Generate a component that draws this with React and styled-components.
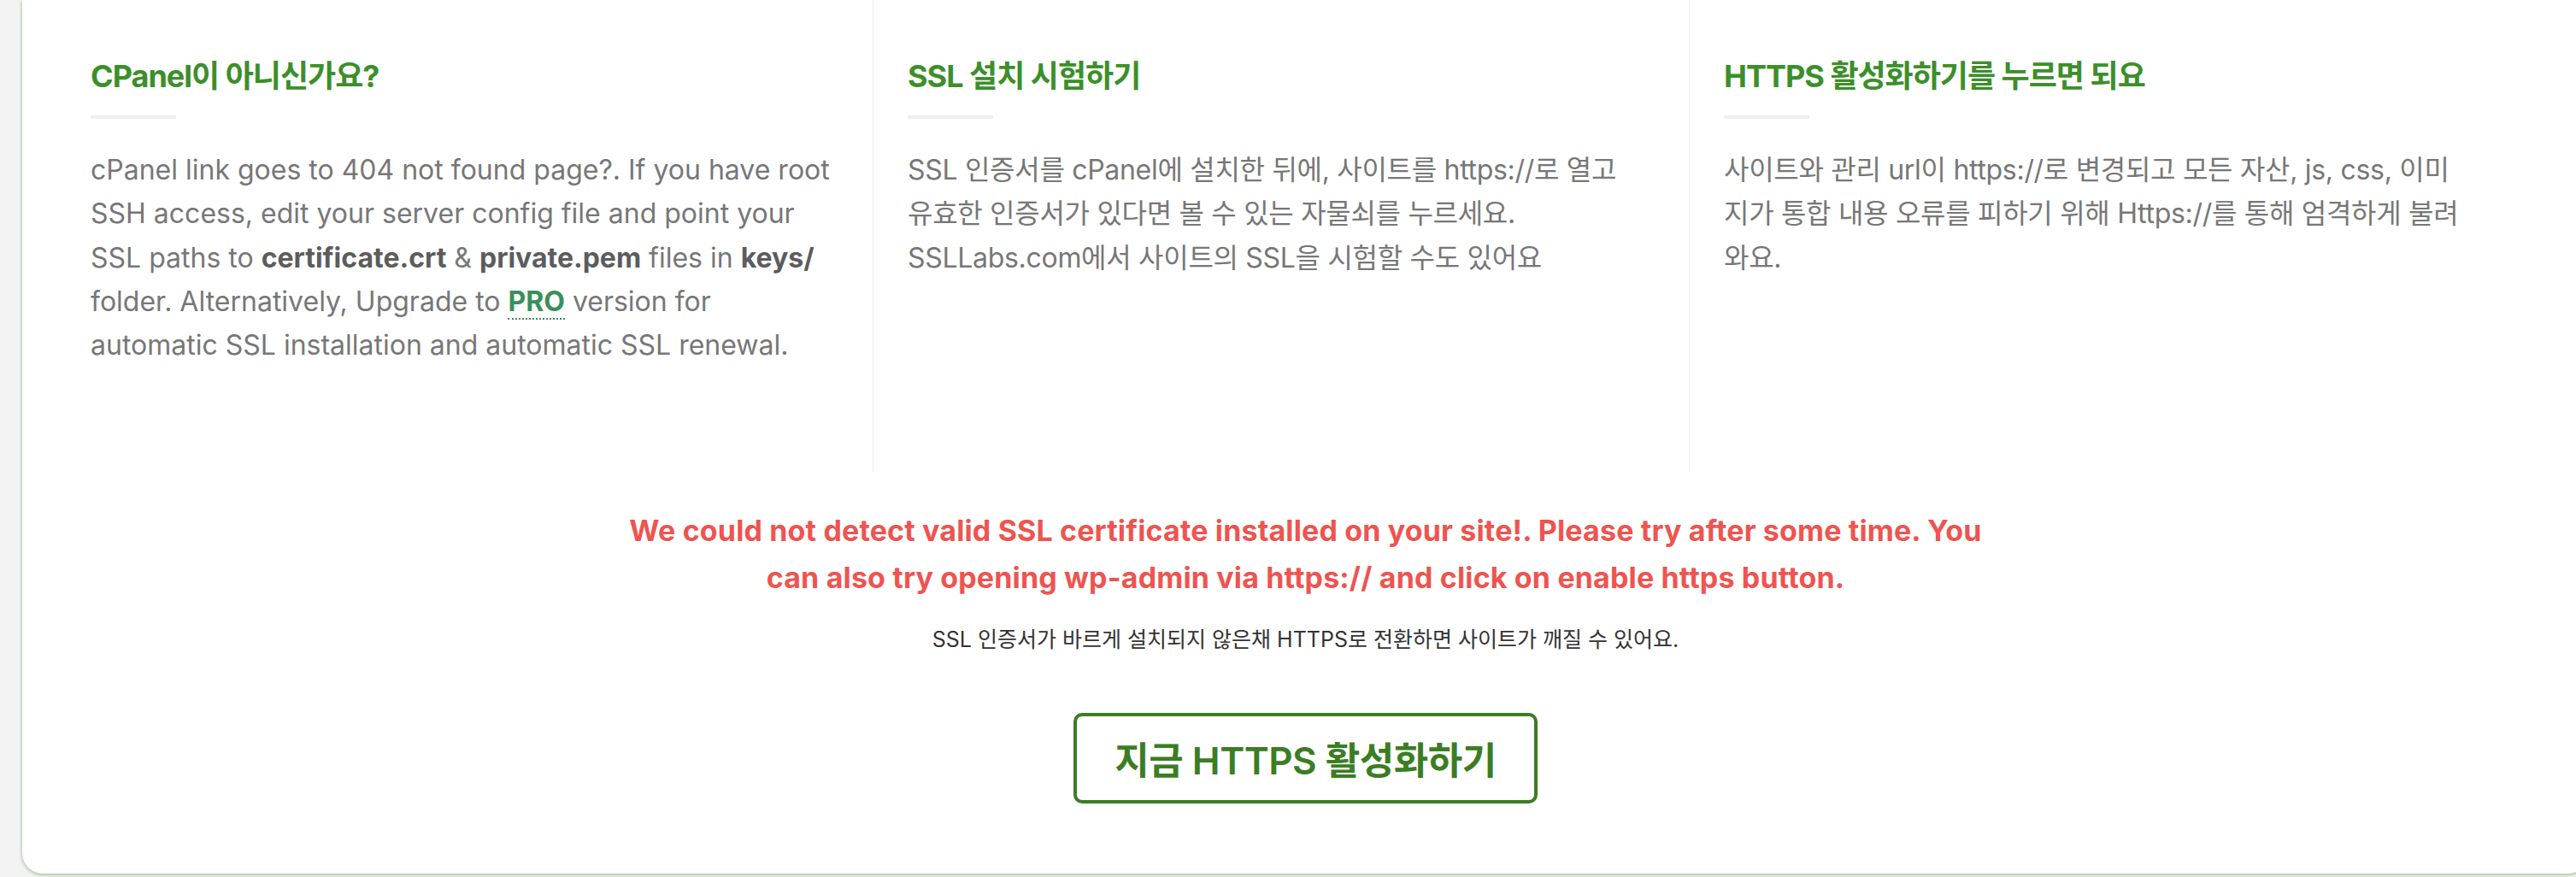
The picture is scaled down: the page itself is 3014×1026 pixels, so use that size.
import React from "react";
import styled, { createGlobalStyle } from "styled-components";

const Global = createGlobalStyle`
  html, body { margin: 0; padding: 0; }
  body {
    background: #f3f3f3;
    overflow: hidden;
    font-family: "Inter", "Noto Sans CJK KR", sans-serif;
  }
`;

const Page = styled.div`
  width: 3014px;
  height: 1026px;
  overflow: hidden;
`;

const Card = styled.section`
  margin-left: 26px;
  width: 3003px;
  box-sizing: border-box;
  background: #fff;
  border-radius: 0 0 24px 24px;
  box-shadow: 0 1px 4px rgba(72, 140, 52, 0.6);
  padding: 0 40px 82px;
  display: flex;
  flex-direction: column;
  align-items: center;
`;

const Columns = styled.div`
  align-self: stretch;
  display: grid;
  grid-template-columns: repeat(3, 955px);
`;

const Column = styled.div`
  box-sizing: border-box;
  padding: 68px 40px 123px;
  & + & {
    border-left: 1px solid #ececec;
  }
`;

const Heading = styled.h3`
  margin: 0;
  font-size: 36px;
  line-height: 1.2;
  font-weight: 700;
  color: #3c8f2a;
  letter-spacing: -1px;
`;

const Rule = styled.div`
  width: 100px;
  height: 4px;
  background: #efefef;
  margin: 24px 0 34px;
`;

const Body = styled.p`
  margin: 0;
  font-size: 32px;
  line-height: 1.6;
  color: #777;
  letter-spacing: ${(p) => (p.$ko ? "-0.3px" : "0")};
  white-space: ${(p) => (p.$ko ? "nowrap" : "normal")};
`;

const Strong = styled.strong`
  font-weight: 700;
  color: #5c5c5c;
`;

const ProLink = styled.a`
  color: #3b8f5b;
  font-weight: 700;
  text-decoration: none;
  border-bottom: 2px dotted #3b8f5b;
`;

const Warning = styled.p`
  margin: 42px 0 0;
  font-size: 34px;
  line-height: 1.6;
  font-weight: 700;
  color: #ee5450;
  text-align: center;
  letter-spacing: 0.15px;
`;

const Note = styled.p`
  margin: 26px 0 0;
  font-size: 25px;
  line-height: 1.55;
  color: #333;
  text-align: center;
`;

const ActionButton = styled.button`
  margin-top: 66px;
  box-sizing: border-box;
  height: 106px;
  padding: 0 44px;
  background: #fff;
  border: 4px solid #3b7d23;
  border-radius: 10px;
  color: #3b7d23;
  font-family: "Inter", "Noto Sans CJK KR", sans-serif;
  font-size: 44px;
  font-weight: 600;
  letter-spacing: -0.5px;
  cursor: pointer;
`;

export default function App() {
  return (
    <Page>
      <Global />
      <Card>
        <Columns>
          <Column>
            <Heading>CPanel이 아니신가요?</Heading>
            <Rule />
            <Body>
              cPanel link goes to 404 not found page?. If you have root SSH
              access, edit your server config file and point your SSL paths to{" "}
              <Strong>certificate.crt</Strong> &amp; <Strong>private.pem</Strong>{" "}
              files in <Strong>keys/</Strong> folder. Alternatively, Upgrade to{" "}
              <ProLink href="#">PRO</ProLink> version for automatic SSL
              installation and automatic SSL renewal.
            </Body>
          </Column>
          <Column>
            <Heading>SSL 설치 시험하기</Heading>
            <Rule />
            <Body $ko>
              SSL 인증서를 cPanel에 설치한 뒤에, 사이트를 https://로 열고
              <br />
              유효한 인증서가 있다면 볼 수 있는 자물쇠를 누르세요.
              <br />
              SSLLabs.com에서 사이트의 SSL을 시험할 수도 있어요
            </Body>
          </Column>
          <Column>
            <Heading>HTTPS 활성화하기를 누르면 되요</Heading>
            <Rule />
            <Body $ko>
              사이트와 관리 url이 https://로 변경되고 모든 자산, js, css, 이미
              <br />
              지가 통합 내용 오류를 피하기 위해 Https://를 통해 엄격하게 불려
              <br />
              와요.
            </Body>
          </Column>
        </Columns>
        <Warning>
          We could not detect valid SSL certificate installed on your site!. Please try after some time. You
          <br />
          can also try opening wp-admin via https:// and click on enable https button.
        </Warning>
        <Note>SSL 인증서가 바르게 설치되지 않은채 HTTPS로 전환하면 사이트가 깨질 수 있어요.</Note>
        <ActionButton>지금 HTTPS 활성화하기</ActionButton>
      </Card>
    </Page>
  );
}
